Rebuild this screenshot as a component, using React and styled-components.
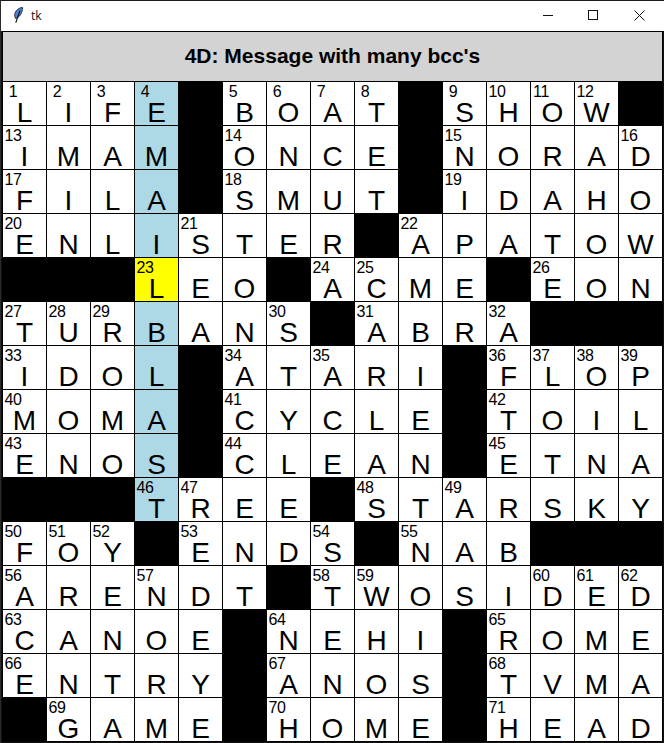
import React from "react";
import styled, { createGlobalStyle } from "styled-components";

const Global = createGlobalStyle`
  html, body { margin: 0; padding: 0; background: #111; }
  #root { width: 664px; height: 743px; overflow: hidden; }
`;

const Window = styled.div`
  width: 664px;
  height: 743px;
  box-sizing: border-box;
  border-top: 1px solid #1a1a1a;
  border-left: 1px solid #2a2a2a;
  background: #111;
  display: flex;
  flex-direction: column;
  font-family: "Liberation Sans", Arial, sans-serif;
`;

const TitleBar = styled.div`
  height: 30px;
  flex: none;
  box-sizing: border-box;
  display: flex;
  align-items: center;
  padding: 0 2px 2px 13px;
  background: #fff;
`;

const AppIcon = styled.svg`
  width: 9px;
  height: 16px;
  flex: none;
`;

const AppName = styled.span`
  font-family: "Open Sans", "Liberation Sans", sans-serif;
  font-size: 12px;
  color: #111;
  margin-left: 8px;
  flex: 1;
`;

const WinButton = styled.div`
  width: ${(p) => p.$w}px;
  height: 28px;
  display: flex;
  align-items: center;
  justify-content: center;
`;

const Header = styled.div`
  height: 50px;
  width: 661px;
  flex: none;
  margin-left: 1px;
  box-sizing: border-box;
  background: #d3d3d3;
  border: 1px solid #000;
  border-bottom: none;
  padding-bottom: 2px;
  display: flex;
  align-items: center;
  justify-content: center;
  font-weight: 700;
  font-size: 21px;
  color: #000;
`;

const Board = styled.div`
  display: grid;
  grid-template-columns: repeat(15, 44px);
  grid-auto-rows: 44px;
  margin-left: 1px;
  background: #fff;
  border-top: 1px solid #000;
  border-left: 1px solid #000;
  width: 660px;
  box-sizing: content-box;
`;

const Cell = styled.div`
  position: relative;
  box-sizing: border-box;
  margin: -1px 0 0 -1px;
  width: 45px;
  height: 45px;
  border: 1px solid #000;
  background: ${(p) => (p.$kind === "block" ? "#000" : p.$kind === "current" ? "#ffff00" : p.$kind === "word" ? "#add8e6" : "#fff")};
  display: flex;
  align-items: center;
  justify-content: center;
  padding-top: 18px;
  font-size: 28px;
  line-height: 20px;
  color: #000;
`;

const Num = styled.span`
  position: absolute;
  left: 0;
  top: 1px;
  width: 20px;
  text-align: center;
  font-size: 16px;
  letter-spacing: -0.4px;
  line-height: 17px;
  color: #000;
`;

const rows = [
  "LIFE#BOAT#SHOW#",
  "IMAM#ONCE#NORAD",
  "FILA#SMUT#IDAHO",
  "ENLISTER#APATOW",
  "###LEO#ACME#EON",
  "TURBANS#ABRA###",
  "IDOL#ATARI#FLOP",
  "MOMA#CYCLE#TOIL",
  "ENOS#CLEAN#ETNA",
  "###TREE#STARSKY",
  "FOY#ENDS#NAB###",
  "ARENDT#TWOSIDED",
  "CANOE#NEHI#ROME",
  "ENTRY#ANOS#TVMA",
  "#GAME#HOME#HEAD",
];

const nums = {
  "0,0": 1, "0,1": 2, "0,2": 3, "0,3": 4, "0,5": 5, "0,6": 6, "0,7": 7, "0,8": 8, "0,10": 9, "0,11": 10, "0,12": 11, "0,13": 12,
  "1,0": 13, "1,5": 14, "1,10": 15, "1,14": 16,
  "2,0": 17, "2,5": 18, "2,10": 19,
  "3,0": 20, "3,4": 21, "3,9": 22,
  "4,3": 23, "4,7": 24, "4,8": 25, "4,12": 26,
  "5,0": 27, "5,1": 28, "5,2": 29, "5,6": 30, "5,8": 31, "5,11": 32,
  "6,0": 33, "6,5": 34, "6,7": 35, "6,11": 36, "6,12": 37, "6,13": 38, "6,14": 39,
  "7,0": 40, "7,5": 41, "7,11": 42,
  "8,0": 43, "8,5": 44, "8,11": 45,
  "9,3": 46, "9,4": 47, "9,8": 48, "9,10": 49,
  "10,0": 50, "10,1": 51, "10,2": 52, "10,4": 53, "10,7": 54, "10,9": 55,
  "11,0": 56, "11,3": 57, "11,7": 58, "11,8": 59, "11,12": 60, "11,13": 61, "11,14": 62,
  "12,0": 63, "12,6": 64, "12,11": 65,
  "13,0": 66, "13,6": 67, "13,11": 68,
  "14,1": 69, "14,6": 70, "14,11": 71,
};

const kindOf = (r, c, ch) => {
  if (ch === "#") return "block";
  if (r === 4 && c === 3) return "current";
  if (c === 3 && r <= 9) return "word";
  return "plain";
};

export default function App() {
  return (
    <Window>
      <Global />
      <TitleBar>
        <AppIcon viewBox="0 0 9 16">
          <path d="M8.6 0.5C4.6 0.6 0.8 3.6 0.6 8.6L1.4 11.4C5.4 11 8.4 6 8.6 0.5Z" fill="#4f7fc8" stroke="#1c2b4a" strokeWidth="0.9" />
          <path d="M6 3.6 1.8 15.6" stroke="#111" strokeWidth="1.2" fill="none" />
        </AppIcon>
        <AppName>tk</AppName>
        <WinButton $w={44}>
          <svg width="10" height="10" viewBox="0 0 10 10"><path d="M0 5.5h10" stroke="#111" strokeWidth="1" /></svg>
        </WinButton>
        <WinButton $w={46}>
          <svg width="10" height="10" viewBox="0 0 10 10"><rect x="0.5" y="0.5" width="9" height="9" fill="none" stroke="#111" /></svg>
        </WinButton>
        <WinButton $w={46}>
          <svg width="11" height="11" viewBox="0 0 11 11"><path d="M0.5 0.5l10 10M10.5 0.5l-10 10" stroke="#111" strokeWidth="1" /></svg>
        </WinButton>
      </TitleBar>
      <Header>4D: Message with many bcc's</Header>
      <Board>
        {rows.flatMap((row, r) =>
          [...row].map((ch, c) => (
            <Cell key={`${r}-${c}`} $kind={kindOf(r, c, ch)}>
              {nums[`${r},${c}`] && <Num>{nums[`${r},${c}`]}</Num>}
              {ch === "#" ? null : ch}
            </Cell>
          ))
        )}
      </Board>
    </Window>
  );
}
